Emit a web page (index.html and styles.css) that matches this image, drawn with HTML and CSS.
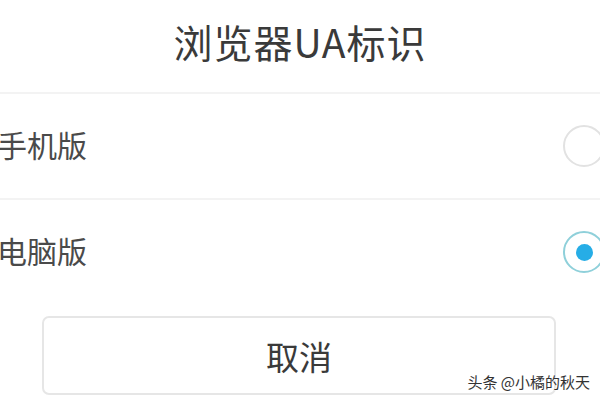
FILE: index.html
```html
<!DOCTYPE html>
<html>
    <head>
        <title>浏览器UA标识</title>
        <link rel="stylesheet" href="styles.css">
    </head>
    <body>
        <div class="dialog">
            <div class="title">浏览器UA标识</div>
            <div class="options">
                <div class="option">
                    <span class="label">手机版</span>
                    <span class="radio"></span>
                </div>
                <div class="option">
                    <span class="label">电脑版</span>
                    <span class="radio checked"></span>
                </div>
            </div>
            <div class="actions">
                <div class="cancel">取消</div>
            </div>
        </div>
        <div class="mark">头条 @小橘的秋天</div>
    </body>
</html>
```

FILE: styles.css
```css
html, body {
    margin: 0;
    height: 100%;
    overflow: hidden;
    background: #fff;
}
body {
    font-family: "Noto Sans CJK SC", "Noto Sans", sans-serif;
    color: #333;
    position: relative;
}
.title {
    height: 82px;
    padding-bottom: 10px;
    display: flex;
    align-items: center;
    justify-content: center;
    font-size: 39px;
    letter-spacing: 1px;
    color: #3a3a3a;
    border-bottom: 2px solid #f3f3f3;
}
.option {
    height: 104px;
    display: flex;
    align-items: center;
    justify-content: space-between;
    border-bottom: 2px solid #f3f3f3;
    margin-right: -5px;
}
.option:last-child {
    border-bottom: none;
}
.label {
    font-size: 30px;
    color: #4a4a4a;
    margin-left: -3px;
    margin-top: -4px;
}
.radio {
    width: 38px;
    height: 38px;
    border: 2px solid #e2e2e2;
    border-radius: 50%;
    display: flex;
    align-items: center;
    justify-content: center;
}
.radio.checked {
    border-color: #8fd0da;
}
.radio.checked::after {
    content: "";
    width: 17px;
    height: 17px;
    border-radius: 50%;
    background: #26ade6;
}
.actions {
    padding: 12px 44px 0 42px;
}
.cancel {
    height: 75px;
    border: 2px solid #e6e6e6;
    border-radius: 7px;
    display: flex;
    align-items: center;
    justify-content: center;
    font-size: 33px;
    color: #3a3a3a;
}
.mark {
    position: absolute;
    right: 10px;
    bottom: 8px;
    font-size: 15px;
    color: #333;
    text-shadow: 0 0 2px #fff, 0 0 2px #fff;
}
```
